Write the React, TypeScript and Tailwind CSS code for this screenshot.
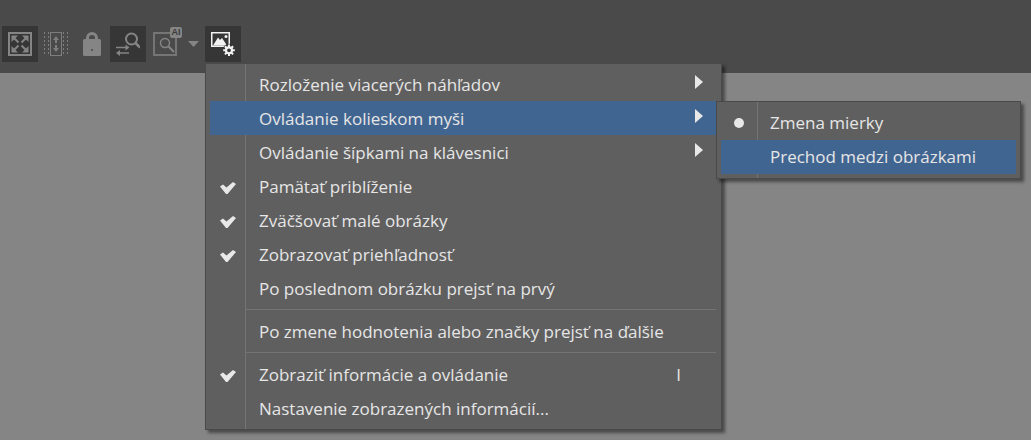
import React from 'react'

const font = "font-['Open_Sans','Noto_Sans',sans-serif]"

const Arrow = () => (
  <svg width="8" height="14" viewBox="0 0 8 14" className="block">
    <path d="M0 0 L8 7 L0 14 Z" fill="#e8e8e8" />
  </svg>
)

const Check = () => (
  <svg width="16" height="12" viewBox="0 0 16 12" className="block">
    <path d="M0 4.5 L3 2.5 L6.5 5.5 L13 0 L16 2 L7.5 12 L6 12 Z" fill="#e8e8e8" />
  </svg>
)

const Btn = ({ active, children }: { active?: boolean; children: React.ReactNode }) => (
  <div className={`flex h-9 w-9 items-center justify-center ${active ? 'bg-[#363636]' : ''}`}>{children}</div>
)

const items: { label: string; arrow?: boolean; check?: boolean; active?: boolean; sep?: boolean; key?: string }[] = [
  { label: 'Rozloženie viacerých náhľadov', arrow: true },
  { label: 'Ovládanie kolieskom myši', arrow: true, active: true },
  { label: 'Ovládanie šípkami na klávesnici', arrow: true },
  { label: 'Pamätať priblíženie', check: true },
  { label: 'Zväčšovať malé obrázky', check: true },
  { label: 'Zobrazovať priehľadnosť', check: true },
  { label: 'Po poslednom obrázku prejsť na prvý', sep: true },
  { label: 'Po zmene hodnotenia alebo značky prejsť na ďalšie', sep: true },
  { label: 'Zobraziť informácie a ovládanie', check: true, key: 'I' },
  { label: 'Nastavenie zobrazených informácií...' },
]

const MenuRow = ({ item }: { item: (typeof items)[number] }) => (
  <>
    <div className={`flex h-[34px] items-center ${item.active ? 'bg-[#416591]' : ''}`}>
      <div className="flex w-[35px] shrink-0 justify-center pt-[3px]">{item.check && <Check />}</div>
      <div className="flex-1 pl-[14px] pt-[2px] text-[17px] text-[#e6e6e6]">{item.label}</div>
      {item.key && <div className="mr-[35px] pt-[2px] text-[17px] text-[#e6e6e6]">{item.key}</div>}
      {item.arrow && <div className="mb-[4px] mr-[13px]"><Arrow /></div>}
    </div>
    {item.sep && <div className="my-[4px] ml-[36px] h-px bg-[#747474]" />}
  </>
)

export default function App() {
  return (
    <div className={`relative h-[440px] w-[1031px] overflow-hidden bg-[#858585] ${font}`}>
      <div className="flex h-[73px] items-start bg-[#4a4a4a] pl-[2px] pt-[26px]">
        <Btn active>
          <svg width="24" height="24" viewBox="0 0 24 24" fill="none" stroke="#858585">
            <rect x="1" y="1" width="22" height="22" strokeWidth="2" />
            <path d="M3.5 3.5 H10 L3.5 10 Z M20.5 3.5 H14 L20.5 10 Z M3.5 20.5 H10 L3.5 14 Z M20.5 20.5 H14 L20.5 14 Z" fill="#858585" stroke="none" />
            <path d="M6 6 L10.5 10.5 M18 6 L13.5 10.5 M6 18 L10.5 13.5 M18 18 L13.5 13.5" strokeWidth="2" />
          </svg>
        </Btn>
        <Btn>
          <svg width="24" height="24" viewBox="0 0 24 24" fill="none" stroke="#7d7d7d">
            <path d="M0.5 0 V24 M23.5 0 V24 M4.5 0 V24 M19.5 0 V24" strokeWidth="1" strokeDasharray="2 2" />
            <rect x="6.5" y="0.5" width="11" height="23" strokeWidth="1" />
            <path d="M12 4 L15 8 H13 V11 H11 V8 H9 Z M12 20 L15 16 H13 V13 H11 V16 H9 Z" fill="#7d7d7d" stroke="none" />
          </svg>
        </Btn>
        <Btn>
          <svg width="18" height="24" viewBox="0 0 18 24" fill="none">
            <path d="M4.5 9 V6 A4.5 4.5 0 0 1 13.5 6 V9" stroke="#858585" strokeWidth="3" />
            <rect x="0" y="7" width="18" height="17" rx="1.5" fill="#858585" />
            <circle cx="9" cy="18" r="1" fill="#4a4a4a" />
          </svg>
        </Btn>
        <Btn active>
          <svg width="24" height="24" viewBox="0 0 24 24" fill="none" stroke="#858585">
            <circle cx="15.5" cy="7" r="5.5" strokeWidth="2" />
            <path d="M19.5 11 L24 15.5" strokeWidth="2.5" />
            <path d="M0 15.5 H10 M3 21 H13" strokeWidth="1.5" />
            <path d="M13.5 15.5 L9.5 12.5 V18.5 Z M0 21 L4 18 V24 Z" fill="#858585" stroke="none" />
          </svg>
        </Btn>
        <Btn>
          <div className="relative ml-[2px] h-[24px] w-[24px] border-2 border-[#757575]">
            <svg width="18" height="18" viewBox="0 0 18 18" fill="none" stroke="#858585" className="absolute left-[3px] top-[2px]">
              <circle cx="7" cy="7" r="4.5" strokeWidth="1.5" />
              <path d="M10.5 10.5 L16 16" strokeWidth="2" />
            </svg>
            <div className="absolute -right-[7px] -top-[7px] flex h-[11px] w-[12px] items-center justify-center rounded-[2px] bg-[#858585] font-['Liberation_Sans',sans-serif] text-[9px] font-bold leading-none text-[#3c3c3c]">AI</div>
          </div>
        </Btn>
        <svg width="11" height="6" viewBox="0 0 11 6" className="ml-[6px] mr-[6px] mt-[15px]">
          <path d="M0 0 H11 L5.5 6 Z" fill="#858585" />
        </svg>
        <Btn active>
          <svg width="24" height="24" viewBox="0 0 24 24" fill="none">
            <rect x="0.75" y="0.75" width="17.5" height="13.5" stroke="#f2f2f2" strokeWidth="1.5" />
            <path d="M2 13.5 L7 5.5 L9 8 L11 6 L16 13.5 Z" fill="#f2f2f2" />
            <circle cx="15" cy="4.5" r="1.5" fill="#f2f2f2" />
            <circle cx="18" cy="18.3" r="6.5" fill="#363636" />
            <circle cx="18" cy="18.3" r="3" stroke="#f2f2f2" strokeWidth="2.2" />
            <path d="M18 12.5 V15 M18 21.5 V24 M12.2 18.3 H14.8 M21.2 18.3 H23.8 M13.9 14.2 L15.7 16 M20.3 20.6 L22.1 22.4 M22.1 14.2 L20.3 16 M15.7 20.6 L13.9 22.4" stroke="#f2f2f2" strokeWidth="2" />
          </svg>
        </Btn>
      </div>

      <div className="absolute left-[205px] top-[63px] h-[367px] w-[517px] border border-[#4a4a4a] bg-[#5f5f5f] pb-[3px] pl-[4px] pr-[5px] pt-[3px] shadow-[3px_3px_3px_rgba(0,0,0,0.45)]">
        <div className="absolute bottom-0 left-[39px] top-0 w-px bg-[#747474]" />
        <div className="relative">
          {items.map((item) => (
            <MenuRow key={item.label} item={item} />
          ))}
        </div>
      </div>

      <div className="absolute left-[716px] top-[101px] h-[78px] w-[305px] border border-[#4a4a4a] bg-[#5f5f5f] pl-[4px] pr-[4px] pt-[4px] shadow-[3px_3px_3px_rgba(0,0,0,0.45)]">
        <div className="absolute bottom-0 left-[40px] top-0 w-px bg-[#747474]" />
        <div className="relative flex h-[34px] items-center">
          <div className="flex w-[36px] justify-center">
            <div className="h-[10px] w-[10px] rounded-full bg-[#e8e8e8]" />
          </div>
          <div className="pl-[13px] text-[17px] text-[#e6e6e6]">Zmena mierky</div>
        </div>
        <div className="relative flex h-[34px] items-center bg-[#416591]">
          <div className="w-[36px]" />
          <div className="pl-[13px] text-[17px] text-[#e6e6e6]">Prechod medzi obrázkami</div>
        </div>
      </div>
    </div>
  )
}
